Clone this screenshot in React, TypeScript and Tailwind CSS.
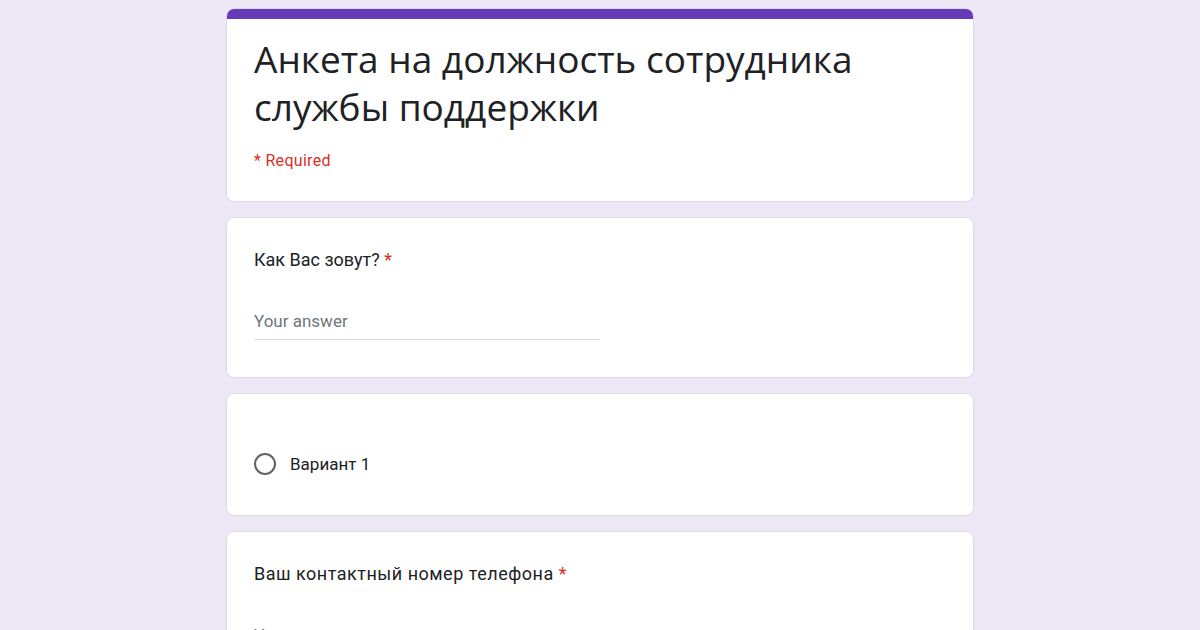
export default function App() {
  return (
    <div className="min-h-screen w-full bg-[#ede7f6] flex justify-center pt-2 pb-10" style={{ fontFamily: 'Roboto, "Noto Sans", sans-serif' }}>
      <div className="w-[748px] flex flex-col gap-[15px]">
        {/* header card */}
        <div className="bg-white rounded-lg border border-[#dadce0] overflow-hidden">
          <div className="h-[10px] bg-[#673ab7]" />
          <div className="px-[27px] pt-[16px] pb-[28px]">
            <h1 className="text-[37px] leading-[48px] text-[#202124] font-normal" style={{ fontFamily: '"Open Sans", Roboto, sans-serif' }}>
              Анкета на должность сотрудника службы поддержки
            </h1>
            <p className="mt-[18px] text-[16px] tracking-[0.3px] text-[#d93025]">* Required</p>
          </div>
        </div>

        {/* name */}
        <div className="bg-white rounded-lg border border-[#dadce0] px-[27px] pt-[28px] pb-[37px]">
          <p className="text-[18px] text-[#202124]">
            Как Вас зовут? <span className="text-[#d93025]">*</span>
          </p>
          <div className="mt-[36px] w-[346px] border-b border-[#dadce0] pb-[4px] text-[17px] text-[#70757a]">
            Your answer
          </div>
        </div>

        {/* radio */}
        <div className="bg-white rounded-lg border border-[#dadce0] px-[27px] pt-[58px] pb-[38px]">
          <div className="flex items-center gap-[14px]">
            <span className="w-[22px] h-[22px] rounded-full border-2 border-[#5f6368]" />
            <span className="text-[17px] text-[#202124]">Вариант 1</span>
          </div>
        </div>

        {/* phone */}
        <div className="bg-white rounded-lg border border-[#dadce0] px-[27px] pt-[28px] pb-[37px]">
          <p className="text-[18px] tracking-[0.5px] text-[#202124]">
            Ваш контактный номер телефона <span className="text-[#d93025]">*</span>
          </p>
          <div className="mt-[36px] w-[346px] border-b border-[#dadce0] pb-[4px] text-[17px] text-[#70757a]">
            Your answer
          </div>
        </div>
      </div>
    </div>
  );
}
